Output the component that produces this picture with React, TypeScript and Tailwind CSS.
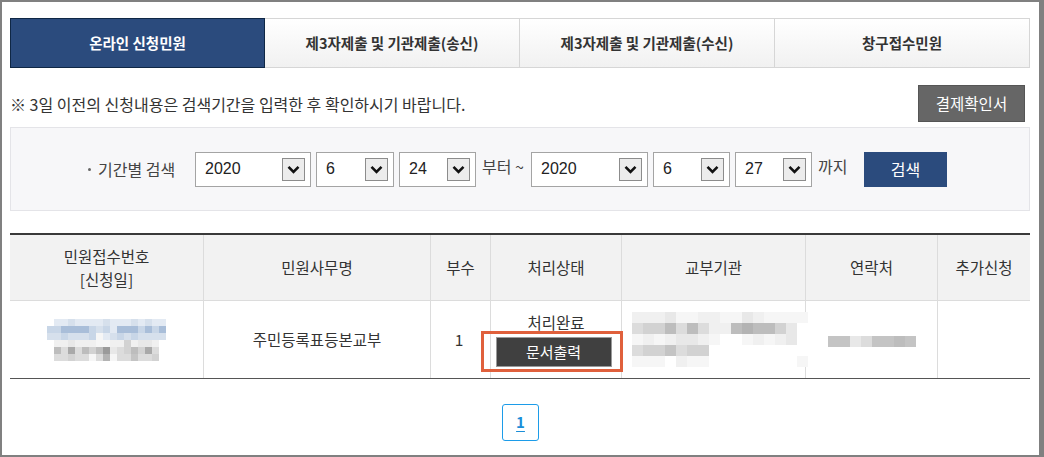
import React from "react";

const FONT = { fontFamily: '"Noto Sans CJK KR", "Noto Sans", sans-serif' };

const tabs = ["온라인 신청민원", "제3자제출 및 기관제출(송신)", "제3자제출 및 기관제출(수신)", "창구접수민원"];

const palette: Record<string, string> = {
  w: "#ffffff",
  a: "#e3eaf3",
  b: "#a9bed9",
  c: "#c8d6e7",
  d: "#d6e0ec",
  e: "#f0f0f0",
  f: "#f6f6f6",
  g: "#bdbdbd",
  h: "#a9a9a9",
  i: "#d2d2d2",
  j: "#dcdcdc",
  k: "#c4c4c4",
  l: "#e8e8e8",
  m: "#9a9a9a",
  n: "#b3b3b3",
};

const mosaicReceipt = [
  "waadaaaadaaadadaa",
  "ccbbbbcdcabbbcbcb",
  "ddcdddcfadcdcdddd",
  "weeleeeffeeiellew",
  "wgjhjgigmljigihjw",
  "wjjijjfjnfjjkjjiw",
];

const mosaicAgency = [
  "eeelffeeffleffff",
  "jiigjgjeegnggilw",
  "fefellefwwfefelw",
  "jiikjiiwwwwwwwww",
  "fffweffwwwwwwwwf",
];

const mosaicPhone = ["kkljkkgk"];

function Mosaic({ rows, size }: { rows: string[]; size: number }) {
  return (
    <div className="flex flex-col">
      {rows.map((r, i) => (
        <div key={i} className="flex">
          {r.split("").map((ch, j) => (
            <div key={j} style={{ width: size, height: size, background: palette[ch] }} />
          ))}
        </div>
      ))}
    </div>
  );
}

function Select({ value, width }: { value: string; width: number }) {
  return (
    <div
      className="h-[35px] bg-white border border-[#a4a4a4] flex items-center justify-between pl-[9px] pr-[5px] text-[16px] text-[#222]"
      style={{ width }}
    >
      <span style={{ fontFamily: '"Liberation Sans", Arial, sans-serif' }}>{value}</span>
      <div className="w-[23px] h-[23px] border border-[#8c8c8c] bg-[#ececec] flex items-center justify-center">
        <svg width="13" height="9" viewBox="0 0 13 9">
          <path d="M1.5 1.8 L6.5 6.8 L11.5 1.8" fill="none" stroke="#111" strokeWidth="2.6" />
        </svg>
      </div>
    </div>
  );
}

export default function App() {
  return (
    <div
      className="w-[1044px] h-[457px] overflow-hidden bg-white border-t-2 border-l-2 border-b-2 border-r-[5px] border-[#808080] pt-[16px] pl-[8px] pr-[9px] text-[#333]"
      style={FONT}
    >
      {/* Tabs */}
      <div className="flex h-[50px]">
        {tabs.map((t, i) =>
          i === 0 ? (
            <div
              key={t}
              className="w-[255px] flex items-center justify-center bg-[#2b4b7d] border border-[#0f2745] text-white text-[14.5px] font-bold"
            >
              {t}
            </div>
          ) : (
            <div
              key={t}
              className="flex-1 flex items-center justify-center bg-gradient-to-b from-white to-[#f1f1f1] border border-[#d6d6d6] border-l-0 text-[14.5px] font-bold text-[#333]"
            >
              {t}
            </div>
          )
        )}
      </div>

      {/* Notice */}
      <div className="mt-[17px] flex items-center justify-between h-[37px] pr-[5px]">
        <p className="text-[16px] text-[#333] leading-none pt-[1px]">※ 3일 이전의 신청내용은 검색기간을 입력한 후 확인하시기 바랍니다.</p>
        <button className="w-[107px] h-[37px] bg-[#666666] border border-[#555] text-white text-[15.5px]">결제확인서</button>
      </div>

      {/* Search */}
      <div className="mt-[5px] h-[84px] bg-[#f7f7f9] border border-[#e4e4e8] flex items-center pl-[77px]">
        <span className="w-[107px] text-[16px] text-[#444] flex items-center">
          <span className="w-[3px] h-[3px] rounded-full bg-[#666] mr-[7px]" />
          기간별 검색
        </span>
        <div className="flex items-center gap-[5px]">
          <Select value="2020" width={116} />
          <Select value="6" width={78} />
          <Select value="24" width={77} />
        </div>
        <span className="w-[55px] pl-[6px] text-[16px] text-[#444] -mt-[6px] whitespace-nowrap">부터 ~</span>
        <div className="flex items-center gap-[5px]">
          <Select value="2020" width={117} />
          <Select value="6" width={77} />
          <Select value="27" width={77} />
        </div>
        <span className="w-[52px] pl-[6px] text-[16px] text-[#444] -mt-[6px]">까지</span>
        <button className="w-[83px] h-[35px] bg-[#2b4b7d] text-white text-[16px]">검색</button>
      </div>

      {/* Table */}
      <div className="mt-[22px] border-t-2 border-[#3a3a3a]">
        <div className="grid grid-cols-[194px_227px_60px_131px_184px_132px_1fr] h-[66px] bg-[#f2f2f2] border-b border-[#dcdcdc] text-[15.5px] text-[#333]">
          <div className="flex flex-col items-center justify-center leading-[23px] border-r border-[#dcdcdc]">
            <span>민원접수번호</span>
            <span>[신청일]</span>
          </div>
          <div className="flex items-center justify-center border-r border-[#dcdcdc]">민원사무명</div>
          <div className="flex items-center justify-center border-r border-[#dcdcdc]">부수</div>
          <div className="flex items-center justify-center border-r border-[#dcdcdc]">처리상태</div>
          <div className="flex items-center justify-center border-r border-[#dcdcdc]">교부기관</div>
          <div className="flex items-center justify-center border-r border-[#dcdcdc]">연락처</div>
          <div className="flex items-center justify-center">추가신청</div>
        </div>
        <div className="grid grid-cols-[194px_227px_60px_131px_184px_132px_1fr] h-[78px] border-b border-[#555] text-[15.5px] text-[#333]">
          <div className="flex items-center justify-center border-r border-[#dcdcdc]">
            <Mosaic rows={mosaicReceipt} size={7} />
          </div>
          <div className="flex items-center justify-center border-r border-[#dcdcdc]">주민등록표등본교부</div>
          <div className="flex items-center justify-center border-r border-[#dcdcdc] pr-[3px]">1</div>
          <div className="flex flex-col items-center justify-center border-r border-[#dcdcdc] pr-[5px]">
            <span className="leading-[20px] mb-[5px] pl-[5px]">처리완료</span>
            <div className="relative">
              <button className="w-[116px] h-[30px] bg-[#404040] border border-[#9a9a9a] text-white text-[15px]">문서출력</button>
              <div className="absolute -left-[15px] -right-[11px] -top-[6px] -bottom-[5px] border-[3px] border-[#e0603c]" />
            </div>
          </div>
          <div className="flex items-center pl-[10px] border-r border-[#dcdcdc]">
            <Mosaic rows={mosaicAgency} size={11} />
          </div>
          <div className="flex items-center justify-center border-r border-[#dcdcdc] pt-[4px]">
            <Mosaic rows={mosaicPhone} size={11} />
          </div>
          <div />
        </div>
      </div>

      {/* Pagination */}
      <div className="mt-[25px] flex justify-center pl-[1px]">
        <div className="w-[37px] h-[37px] border border-[#1c9ce9] rounded-[3px] flex items-center justify-center text-[15px] font-bold text-[#1a8ed8] underline underline-offset-[3px]">
          1
        </div>
      </div>
    </div>
  );
}
